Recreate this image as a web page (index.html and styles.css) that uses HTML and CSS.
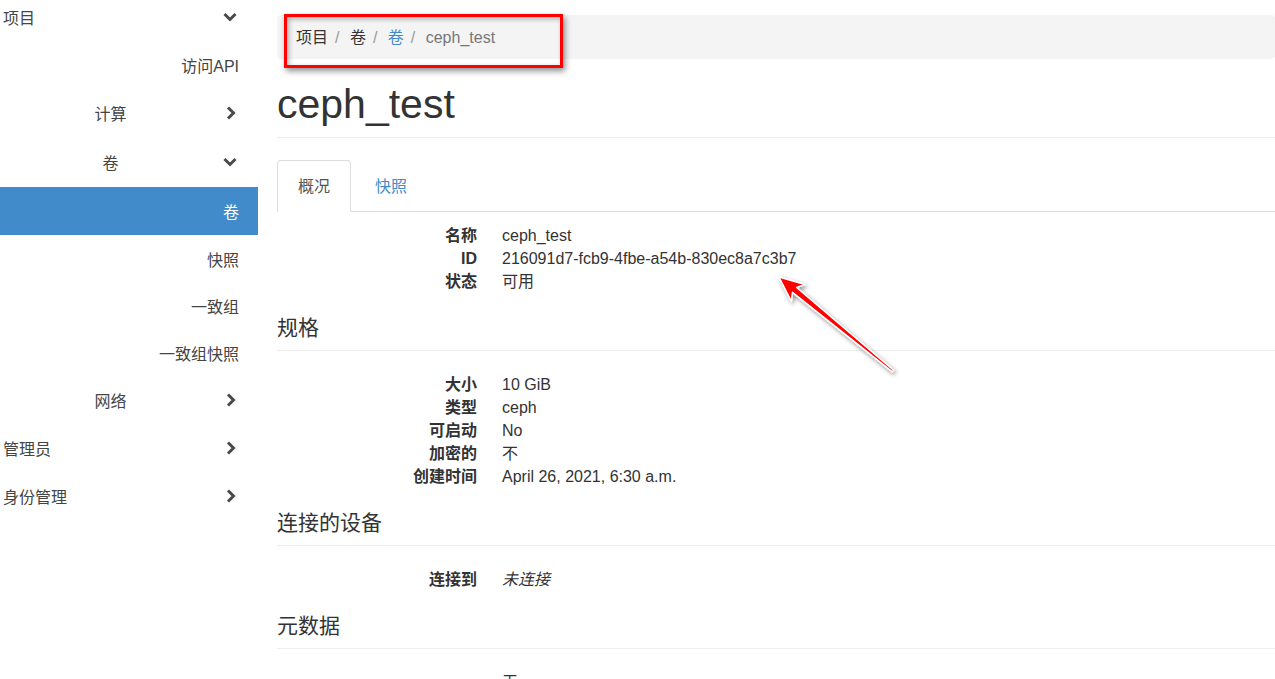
FILE: index.html
```html
<!DOCTYPE html>
<html lang="zh">
<head>
<meta charset="utf-8">
<title>ceph_test</title>
<link rel="stylesheet" href="styles.css">
</head>
<body>
<div class="page">
  <nav class="sidebar">
    <ul class="menu">
      <li class="item lvl1"><span>项目</span><svg class="chev" viewBox="0 0 14 14"><polyline points="1.5,4 7,9.5 12.5,4"/></svg></li>
      <li class="item lvl3"><span>访问API</span></li>
      <li class="item lvl2"><span class="lbl">计算</span><svg class="chev" viewBox="0 0 14 14"><polyline points="5,1.5 10.5,7 5,12.5"/></svg></li>
      <li class="item lvl2 open"><span class="lbl">卷</span><svg class="chev" viewBox="0 0 14 14"><polyline points="1.5,4 7,9.5 12.5,4"/></svg></li>
      <li class="group">
        <ul class="submenu">
          <li class="item lvl3 active"><span>卷</span></li>
          <li class="item lvl3"><span>快照</span></li>
          <li class="item lvl3"><span>一致组</span></li>
          <li class="item lvl3"><span>一致组快照</span></li>
        </ul>
      </li>
      <li class="item lvl2"><span class="lbl">网络</span><svg class="chev" viewBox="0 0 14 14"><polyline points="5,1.5 10.5,7 5,12.5"/></svg></li>
      <li class="item lvl1"><span>管理员</span><svg class="chev" viewBox="0 0 14 14"><polyline points="5,1.5 10.5,7 5,12.5"/></svg></li>
      <li class="item lvl1"><span>身份管理</span><svg class="chev" viewBox="0 0 14 14"><polyline points="5,1.5 10.5,7 5,12.5"/></svg></li>
    </ul>
  </nav>

  <main class="content">
    <ol class="breadcrumb">
      <li class="crumb">项目</li>
      <li class="crumb">卷</li>
      <li class="crumb link">卷</li>
      <li class="crumb current">ceph_test</li>
    </ol>

    <h1 class="title">ceph_test</h1>

    <ul class="tabs">
      <li class="tab active"><span class="tab-link">概况</span></li>
      <li class="tab"><span class="tab-link">快照</span></li>
    </ul>

    <dl class="info first">
      <dt>名称</dt><dd>ceph_test</dd>
      <dt>ID</dt><dd>216091d7-fcb9-4fbe-a54b-830ec8a7c3b7</dd>
      <dt>状态</dt><dd>可用</dd>
    </dl>

    <h3 class="section">规格</h3>
    <dl class="info">
      <dt>大小</dt><dd>10 GiB</dd>
      <dt>类型</dt><dd>ceph</dd>
      <dt>可启动</dt><dd>No</dd>
      <dt>加密的</dt><dd>不</dd>
      <dt>创建时间</dt><dd>April 26, 2021, 6:30 a.m.</dd>
    </dl>

    <h3 class="section">连接的设备</h3>
    <dl class="info">
      <dt>连接到</dt><dd><em>未连接</em></dd>
    </dl>

    <h3 class="section">元数据</h3>
    <dl class="info">
      <dt></dt><dd>无</dd>
    </dl>
  </main>

  <div class="mark-box"></div>
  <svg class="mark-arrow" viewBox="0 0 1275 679" width="1275" height="679">
    <defs>
      <filter id="sh" x="-20%" y="-20%" width="140%" height="140%">
        <feDropShadow dx="1.5" dy="2" stdDeviation="2" flood-color="#000" flood-opacity="0.45"/>
      </filter>
    </defs>
    <polygon filter="url(#sh)" fill="#ff0000" stroke="#ffffff" stroke-width="1.5" stroke-linejoin="round"
      points="779,277 805,284.5 796.6,287.5 893.6,370.2 892.4,371.8 792.5,292.4 791.3,301.4"/>
  </svg>
</div>
</body>
</html>
```

FILE: styles.css
```css
html, body {
  margin: 0;
  padding: 0;
  height: 679px;
  overflow: hidden;
  background: #fff;
}

body {
  font-family: "Liberation Sans", "Noto Sans CJK SC", sans-serif;
  font-size: 16px;
  color: #333;
}

.page {
  position: relative;
  display: flex;
  align-items: flex-start;
  width: 1275px;
}

/* Sidebar */
.sidebar {
  width: 258px;
  flex: 0 0 258px;
}

.menu,
.submenu {
  list-style: none;
  margin: 0;
  padding: 0;
}

.menu {
  margin-top: -7px;
}

.item {
  display: flex;
  align-items: center;
  height: 48px;
  color: #444;
  font-size: 16px;
}

.item.open {
  height: 50px;
}

.submenu .item {
  height: 47px;
}

.submenu .item.active {
  height: 48px;
}

.lvl1 {
  padding: 0 21px 0 3px;
}

.lvl2 {
  padding: 0 21px 0 78px;
}

.lvl2 .lbl {
  width: 65px;
  text-align: center;
}

.lvl3 {
  justify-content: flex-end;
  padding-right: 19px;
}

.item .chev {
  margin-left: auto;
  width: 14px;
  height: 14px;
  fill: none;
  stroke: #4a4a4a;
  stroke-width: 3;
  stroke-linecap: butt;
  stroke-linejoin: miter;
}

.item.active {
  background: #428bca;
  color: #fff;
}

/* Content */
.content {
  flex: 1;
  padding-left: 19px;
  min-width: 0;
}

.breadcrumb {
  list-style: none;
  margin: 15px 0 0;
  padding: 0 19px;
  height: 44px;
  display: flex;
  align-items: center;
  background: #f4f4f4;
  border-radius: 4px;
  font-size: 16px;
  line-height: 23px;
}

.crumb {
  color: #333;
}

.crumb + .crumb::before {
  content: "/\00a0";
  padding: 0 6px 0 7px;
  color: #999;
}

.crumb.link {
  color: #428bca;
}

.crumb.current {
  color: #777;
}

.title {
  margin: 23px 0 0;
  padding-bottom: 10px;
  border-bottom: 1px solid #eee;
  font-size: 41px;
  line-height: 45px;
  font-weight: normal;
  color: #333;
}

.tabs {
  list-style: none;
  margin: 22px 0 0;
  padding: 0;
  display: flex;
  border-bottom: 1px solid #ddd;
}

.tab {
  margin-bottom: -1px;
  margin-right: 3px;
}

.tab-link {
  display: block;
  padding: 14px 20px 13px;
  line-height: 23px;
  border: 1px solid transparent;
  border-radius: 4px 4px 0 0;
  color: #428bca;
}

.tab.active .tab-link {
  border-color: #ddd #ddd transparent;
  background: #fff;
  color: #555;
}

.info {
  display: grid;
  grid-template-columns: 200px 1fr;
  column-gap: 25px;
  margin: 22px 0 0;
  line-height: 23px;
}

.info.first {
  margin-top: 12px;
}

.info dt {
  text-align: right;
  font-weight: bold;
  color: #333;
  min-height: 23px;
}

.info dd {
  margin: 0;
  color: #333;
}

.section {
  margin: 23px 0 0;
  padding-bottom: 11px;
  border-bottom: 1px solid #eee;
  font-size: 21px;
  line-height: 23px;
  font-weight: normal;
  color: #333;
}

/* Annotations */
.mark-box {
  position: absolute;
  left: 284px;
  top: 14px;
  width: 273px;
  height: 48px;
  border: 3px solid #ff0000;
  box-shadow: 2px 3px 6px rgba(0, 0, 0, 0.45), inset 2px 2px 5px rgba(0, 0, 0, 0.3);
}

.mark-arrow {
  position: absolute;
  left: 0;
  top: 0;
  pointer-events: none;
}
```
